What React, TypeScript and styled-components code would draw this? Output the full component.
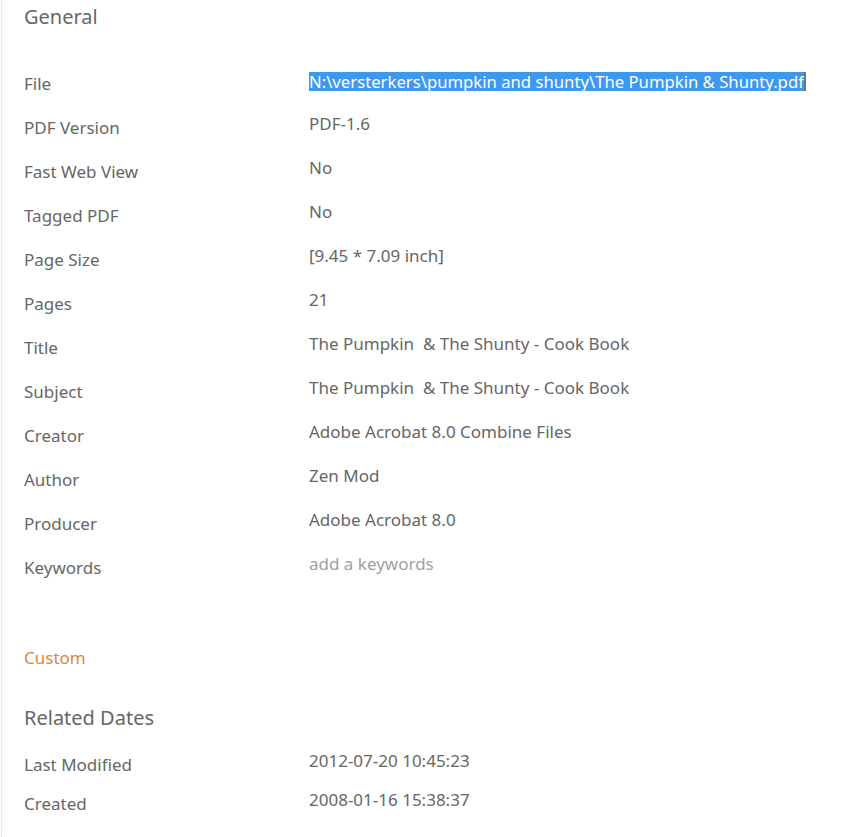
import React from 'react';
import styled, { createGlobalStyle } from 'styled-components';

const GlobalStyle = createGlobalStyle`
  html, body {
    margin: 0;
    padding: 0;
    background: #ffffff;
  }
  body {
    font-family: 'Noto Sans', 'Open Sans', sans-serif;
    color: #666666;
  }
`;

interface Field {
  label: string;
  value: string;
  placeholder?: boolean;
}

const general: Field[] = [
  { label: 'PDF Version', value: 'PDF-1.6' },
  { label: 'Fast Web View', value: 'No' },
  { label: 'Tagged PDF', value: 'No' },
  { label: 'Page Size', value: '[9.45 * 7.09 inch]' },
  { label: 'Pages', value: '21' },
  { label: 'Title', value: 'The Pumpkin\u00a0 & The Shunty - Cook Book' },
  { label: 'Subject', value: 'The Pumpkin\u00a0 & The Shunty - Cook Book' },
  { label: 'Creator', value: 'Adobe Acrobat 8.0 Combine Files' },
  { label: 'Author', value: 'Zen Mod' },
  { label: 'Producer', value: 'Adobe Acrobat 8.0' },
  { label: 'Keywords', value: 'add a keywords', placeholder: true },
];

const dates: Field[] = [
  { label: 'Last Modified', value: '2012-07-20 10:45:23' },
  { label: 'Created', value: '2008-01-16 15:38:37' },
];

const App: React.FC = () => {
  return (
    <>
      <GlobalStyle />
      <Page>
        <Heading>General</Heading>
        <Rows>
          <Row>
            <Label>File</Label>
            <FileValue>
              <Selected>N:\versterkers\pumpkin and shunty\The Pumpkin &amp; Shunty.pdf</Selected>
              <Caret />
            </FileValue>
          </Row>
          {general.map((f) => (
            <Row key={f.label}>
              <Label>{f.label}</Label>
              <Value $placeholder={f.placeholder}>{f.value}</Value>
            </Row>
          ))}
        </Rows>
        <CustomLink>Custom</CustomLink>
        <Heading $top={35}>Related Dates</Heading>
        <DateRows>
          {dates.map((f) => (
            <DateRow key={f.label}>
              <Label>{f.label}</Label>
              <Value>{f.value}</Value>
            </DateRow>
          ))}
        </DateRows>
      </Page>
    </>
  );
};

const Page = styled.div`
  min-height: 837px;
  box-sizing: border-box;
  border-left: 1px dotted #d4d4d4;
  margin-left: 1px;
  padding: 4px 0 0 22px;
`;

const Heading = styled.h2<{ $top?: number }>`
  margin: ${({ $top }) => $top ?? 0}px 0 0;
  font-size: 20px;
  font-weight: 400;
  line-height: 26px;
  color: #666666;
`;

const Rows = styled.div`
  margin-top: 42px;
  display: flex;
  flex-direction: column;
`;

const Row = styled.div`
  display: grid;
  grid-template-columns: 285px 1fr;
  height: 44px;
  align-items: start;
`;

const DateRows = styled.div`
  margin-top: 22px;
  display: flex;
  flex-direction: column;
`;

const DateRow = styled(Row)`
  height: 39px;
`;

const Label = styled.span`
  font-size: 17px;
  line-height: 24px;
  color: #666666;
`;

const Value = styled.span<{ $placeholder?: boolean }>`
  font-size: 17px;
  line-height: 24px;
  margin-top: -4px;
  color: ${({ $placeholder }) => ($placeholder ? '#a0a0a0' : '#666666')};
`;

const FileValue = styled.div`
  display: flex;
  align-items: stretch;
  height: 19px;
`;

const Selected = styled.span`
  display: block;
  background: #3d98ef;
  color: #ffffff;
  font-size: 16.7px;
  line-height: 19px;
  white-space: nowrap;
`;

const Caret = styled.span`
  width: 2px;
  background: #6a7884;
`;

const CustomLink = styled.div`
  margin-top: 46px;
  font-size: 17px;
  line-height: 24px;
  color: #d9893a;
`;

export default App;
